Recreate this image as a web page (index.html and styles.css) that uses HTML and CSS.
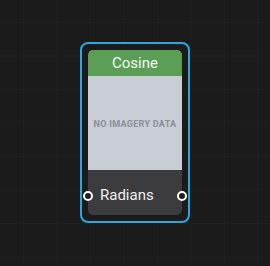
FILE: index.html
```html
<!DOCTYPE html>
<html>
<head>
<meta charset="utf-8">
<link rel="stylesheet" href="styles.css">
</head>
<body>
<div class="canvas">
  <div class="selection">
    <div class="node">
      <div class="node-header">Cosine</div>
      <div class="node-preview">NO IMAGERY DATA</div>
      <div class="node-body">
        <span class="pin pin-in"></span>
        <span class="pin-label">Radians</span>
        <span class="pin pin-out"></span>
      </div>
    </div>
  </div>
</div>
</body>
</html>
```
FILE: styles.css
```css
html, body {
  margin: 0;
  padding: 0;
  background: #1b1b1b;
}
.canvas {
  width: 270px;
  height: 266px;
  box-sizing: border-box;
  padding: 42px 0 0 80px;
  background-color: #1b1b1b;
  background-image:
    linear-gradient(to right, #1f1f1f 1px, transparent 1px),
    linear-gradient(to bottom, #1f1f1f 1px, transparent 1px);
  background-size: 33.5px 33.5px;
  background-position: 23px 22px;
  font-family: Roboto, "Liberation Sans", sans-serif;
}
.selection {
  width: 110px;
  height: 181px;
  box-sizing: border-box;
  border: 2px solid #2ba6e1;
  border-radius: 8px;
  padding: 6px;
  background: #1b1b1b;
}
.node {
  position: relative;
  height: 100%;
  border-radius: 5px;
  background: #3c3c3e;
  display: flex;
  flex-direction: column;
}
.node-header {
  height: 26px;
  background: #5b9e56;
  border-radius: 5px 5px 0 0;
  color: #f4f7f2;
  font-size: 15px;
  line-height: 27px;
  text-align: center;
}
.node-preview {
  height: 94px;
  background: #c8cdd6;
  color: #8a8e96;
  font-size: 9px;
  font-weight: bold;
  letter-spacing: 0.3px;
  display: flex;
  align-items: center;
  justify-content: center;
  padding-top: 2px;
  box-sizing: border-box;
}
.node-body {
  flex: 1;
  display: flex;
  align-items: flex-start;
  padding: 16px 0 0 12px;
}
.pin-label {
  color: #f0f0f0;
  font-size: 15px;
  line-height: 18px;
}
.pin {
  position: absolute;
  width: 6px;
  height: 6px;
  border: 2px solid #ffffff;
  border-radius: 50%;
  background: #1e1e1e;
  top: 141px;
}
.pin-in { left: -5px; }
.pin-out { right: -5px; }
```
